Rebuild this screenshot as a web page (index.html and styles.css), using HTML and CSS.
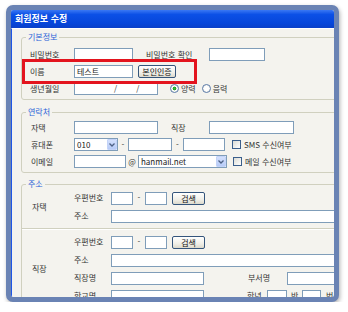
FILE: index.html
```html
<!DOCTYPE html>
<html lang="ko">
<head>
<meta charset="utf-8">
<title>회원정보 수정</title>
<link rel="stylesheet" href="styles.css">
</head>
<body>
<div class="frame">
  <div class="window">
    <div class="titlebar">회원정보 수정</div>
    <div class="content">
      <fieldset class="group g-basic">
        <legend>기본정보</legend>
        <div class="rows">
          <div class="row">
            <span class="label">비밀번호</span>
            <span class="field w59"></span>
            <span class="label2 l-pwc">비밀번호 확인</span>
            <span class="field w56"></span>
          </div>
          <div class="row">
            <span class="label">이름</span>
            <span class="field w59">테스트</span>
            <span class="btn b-auth">본인인증</span>
          </div>
          <div class="row">
            <span class="label">생년월일</span>
            <span class="field w84 birth"><span class="slash s1">/</span><span class="slash s2">/</span></span>
            <span class="radio on r1"></span><span class="rtext">양력</span>
            <span class="radio r2"></span><span class="rtext">음력</span>
          </div>
        </div>
      </fieldset>

      <fieldset class="group g-contact">
        <legend>연락처</legend>
        <div class="rows">
          <div class="row">
            <span class="label">자택</span>
            <span class="field w84"></span>
            <span class="label2 l-office">직장</span>
            <span class="field w85"></span>
          </div>
          <div class="row">
            <span class="label">휴대폰</span>
            <span class="select w44"><span class="sval">010</span><span class="arrow"><svg width="6" height="4" viewBox="0 0 6 4"><path d="M0.5 0.5 L3 3 L5.5 0.5" fill="none" stroke="#4d6185" stroke-width="1.3"/></svg></span></span>
            <span class="dash d1">-</span>
            <span class="field w44"></span>
            <span class="dash d2">-</span>
            <span class="field w42"></span>
            <span class="check c1"></span><span class="ctext">SMS 수신여부</span>
          </div>
          <div class="row">
            <span class="label">이메일</span>
            <span class="field w52"></span>
            <span class="at">@</span>
            <span class="select w89"><span class="sval">hanmail.net</span><span class="arrow"><svg width="6" height="4" viewBox="0 0 6 4"><path d="M0.5 0.5 L3 3 L5.5 0.5" fill="none" stroke="#4d6185" stroke-width="1.3"/></svg></span></span>
            <span class="check c2"></span><span class="ctext">메일 수신여부</span>
          </div>
        </div>
      </fieldset>

      <fieldset class="group g-addr">
        <legend>주소</legend>
        <div class="section">
          <span class="glabel">자택</span>
          <div class="subrows">
            <div class="srow">
              <span class="slabel">우편번호</span>
              <span class="field w22"></span>
              <span class="dash zd">-</span>
              <span class="field w22"></span>
              <span class="btn b-search">검색</span>
            </div>
            <div class="srow">
              <span class="slabel">주소</span>
              <span class="field wlong"></span>
            </div>
          </div>
        </div>
        <div class="sep"></div>
        <div class="section">
          <span class="glabel">직장</span>
          <div class="subrows">
            <div class="srow">
              <span class="slabel">우편번호</span>
              <span class="field w22"></span>
              <span class="dash zd">-</span>
              <span class="field w22"></span>
              <span class="btn b-search">검색</span>
            </div>
            <div class="srow">
              <span class="slabel">주소</span>
              <span class="field wlong"></span>
            </div>
            <div class="srow">
              <span class="slabel">직장명</span>
              <span class="field w93"></span>
              <span class="label2 l-dept">부서명</span>
              <span class="field wlong"></span>
            </div>
            <div class="srow">
              <span class="slabel">학교명</span>
              <span class="field w93"></span>
              <span class="label2 l-grade">학년</span>
              <span class="field w20"></span>
              <span class="small-l l-ban">반</span>
              <span class="field w19"></span>
              <span class="small-l l-beon">번</span>
            </div>
          </div>
        </div>
      </fieldset>

      <div class="highlight"></div>
    </div>
  </div>
</div>
</body>
</html>
```

FILE: styles.css
```css
* { box-sizing: border-box; }
html, body { margin: 0; padding: 0; background: #fff; }
body {
  font-family: "Noto Sans CJK KR", "Noto Sans", sans-serif;
  font-size: 8px;
  line-height: 10px;
  color: #333;
}
.frame {
  margin: 5px 0 0 6px;
  width: 333px;
  height: 297px;
  border: 5px solid #6a83b4;
  border-radius: 7px;
  box-shadow: 1px 2px 4px rgba(0, 0, 0, 0.3);
  overflow: hidden;
  background: #f4f3ee;
}
.window { height: 100%; display: flex; flex-direction: column; }
.titlebar {
  flex: none;
  height: 18px;
  background: linear-gradient(#3a78f4, #0c50e6 25%, #0646da 75%, #0a40c8);
  color: #fff;
  font-weight: bold;
  font-size: 9px;
  line-height: 18px;
  padding-left: 4px;
}
.content {
  flex: 1;
  position: relative;
  border-left: 1px solid #1f56e6;
  border-top: 1px solid #fff;
  padding-top: 3px;
}
.group {
  margin: 0 -10px 0 9px;
  padding: 0;
  border: 1px solid #d0d0bf;
  border-radius: 3px;
  min-width: 0;
}
.group legend {
  margin-left: 4px;
  padding: 0 2px;
  color: #2a62d8;
  line-height: 10px;
}
.g-contact { margin-top: 7px; }
.g-addr { margin-top: 6px; }

.g-basic .rows { padding: 4px 0 2px 8px; }
.g-contact .rows { padding: 2px 0 2px 9px; }
.row { display: flex; align-items: center; height: 17px; }
.label { width: 44px; flex: none; }
.g-contact .label { width: 43px; }
.label2 { flex: none; }
.l-pwc { margin-left: 13px; width: 63px; }
.l-office { margin-left: 13px; width: 38px; }
.l-dept { margin-left: 44px; width: 39px; }
.l-grade { margin-left: 43px; width: 20px; }
.small-l { flex: none; }
.l-ban { width: 15px; padding-left: 4px; }
.l-beon { margin-left: 5px; }

.field {
  flex: none;
  display: flex;
  align-items: center;
  height: 13px;
  border: 1px solid #7f9db9;
  background: #fff;
  padding: 0 2px;
  color: #222;
  white-space: nowrap;
}
.w19 { width: 19px; }
.w20 { width: 20px; }
.w22 { width: 22px; }
.w42 { width: 42px; }
.w44 { width: 44px; }
.w52 { width: 52px; }
.w56 { width: 56px; }
.w59 { width: 59px; }
.w84 { width: 84px; }
.w85 { width: 85px; }
.w89 { width: 89px; }
.w93 { width: 93px; }
.wlong { width: 260px; }

.birth { padding: 0; }
.slash { color: #333; }
.s1 { margin-left: 39px; }
.s2 { margin-left: 19px; }

.btn {
  flex: none;
  height: 13px;
  border: 1px solid #34557c;
  border-radius: 2px;
  background: linear-gradient(#ffffff, #f0efe8 60%, #dcd9cc);
  color: #111;
  text-align: center;
  line-height: 11px;
}
.b-auth { margin-left: 5px; width: 38px; }
.b-search { margin-left: 5px; width: 33px; }

.radio {
  flex: none;
  width: 9px;
  height: 9px;
  border: 1px solid #5a7aa8;
  border-radius: 50%;
  background: radial-gradient(circle, #fff 40%, #e2e2da);
  position: relative;
}
.radio.on { background: radial-gradient(circle, #3fbf3f 0, #21a121 1.6px, #fff 2.2px, #fff 40%, #e2e2da); }
.r1 { margin-left: 12px; }
.r2 { margin-left: 6px; }
.rtext { flex: none; margin-left: 2px; }

.select {
  flex: none;
  display: flex;
  justify-content: space-between;
  align-items: center;
  height: 13px;
  border: 1px solid #7f9db9;
  background: #fff;
  padding: 0 0 0 2px;
  color: #222;
}
.arrow {
  width: 10px;
  height: 11px;
  background: linear-gradient(#d3e0fd, #b7cbf7);
  border: 1px solid #c3d3f8;
  border-radius: 1px;
  display: flex;
  align-items: center;
  justify-content: center;
}
.dash { flex: none; text-align: center; }
.d1 { width: 10px; }
.d2 { width: 11px; }
.zd { width: 12px; }
.at { flex: none; width: 12px; text-align: center; }

.check {
  flex: none;
  width: 9px;
  height: 9px;
  border: 1px solid #3b5f8c;
  background: linear-gradient(135deg, #dcdcd5, #fff);
}
.c1 { margin-left: 7px; }
.c2 { margin-left: 6px; }
.ctext { flex: none; margin-left: 3px; white-space: nowrap; }

.section { display: flex; align-items: center; }
.glabel { flex: none; width: 52px; padding-left: 10px; }
.subrows { flex: 1; display: flex; flex-direction: column; }
.srow { display: flex; align-items: center; height: 18px; }
.slabel { flex: none; width: 37px; }
.sep {
  height: 2px;
  margin: 3px 0;
  border-top: 1px solid #d0d0bf;
  border-bottom: 1px solid #fff;
}

.highlight {
  position: absolute;
  left: 10px;
  top: 30px;
  width: 175px;
  height: 25px;
  border: 3px solid #e3141e;
}
```
